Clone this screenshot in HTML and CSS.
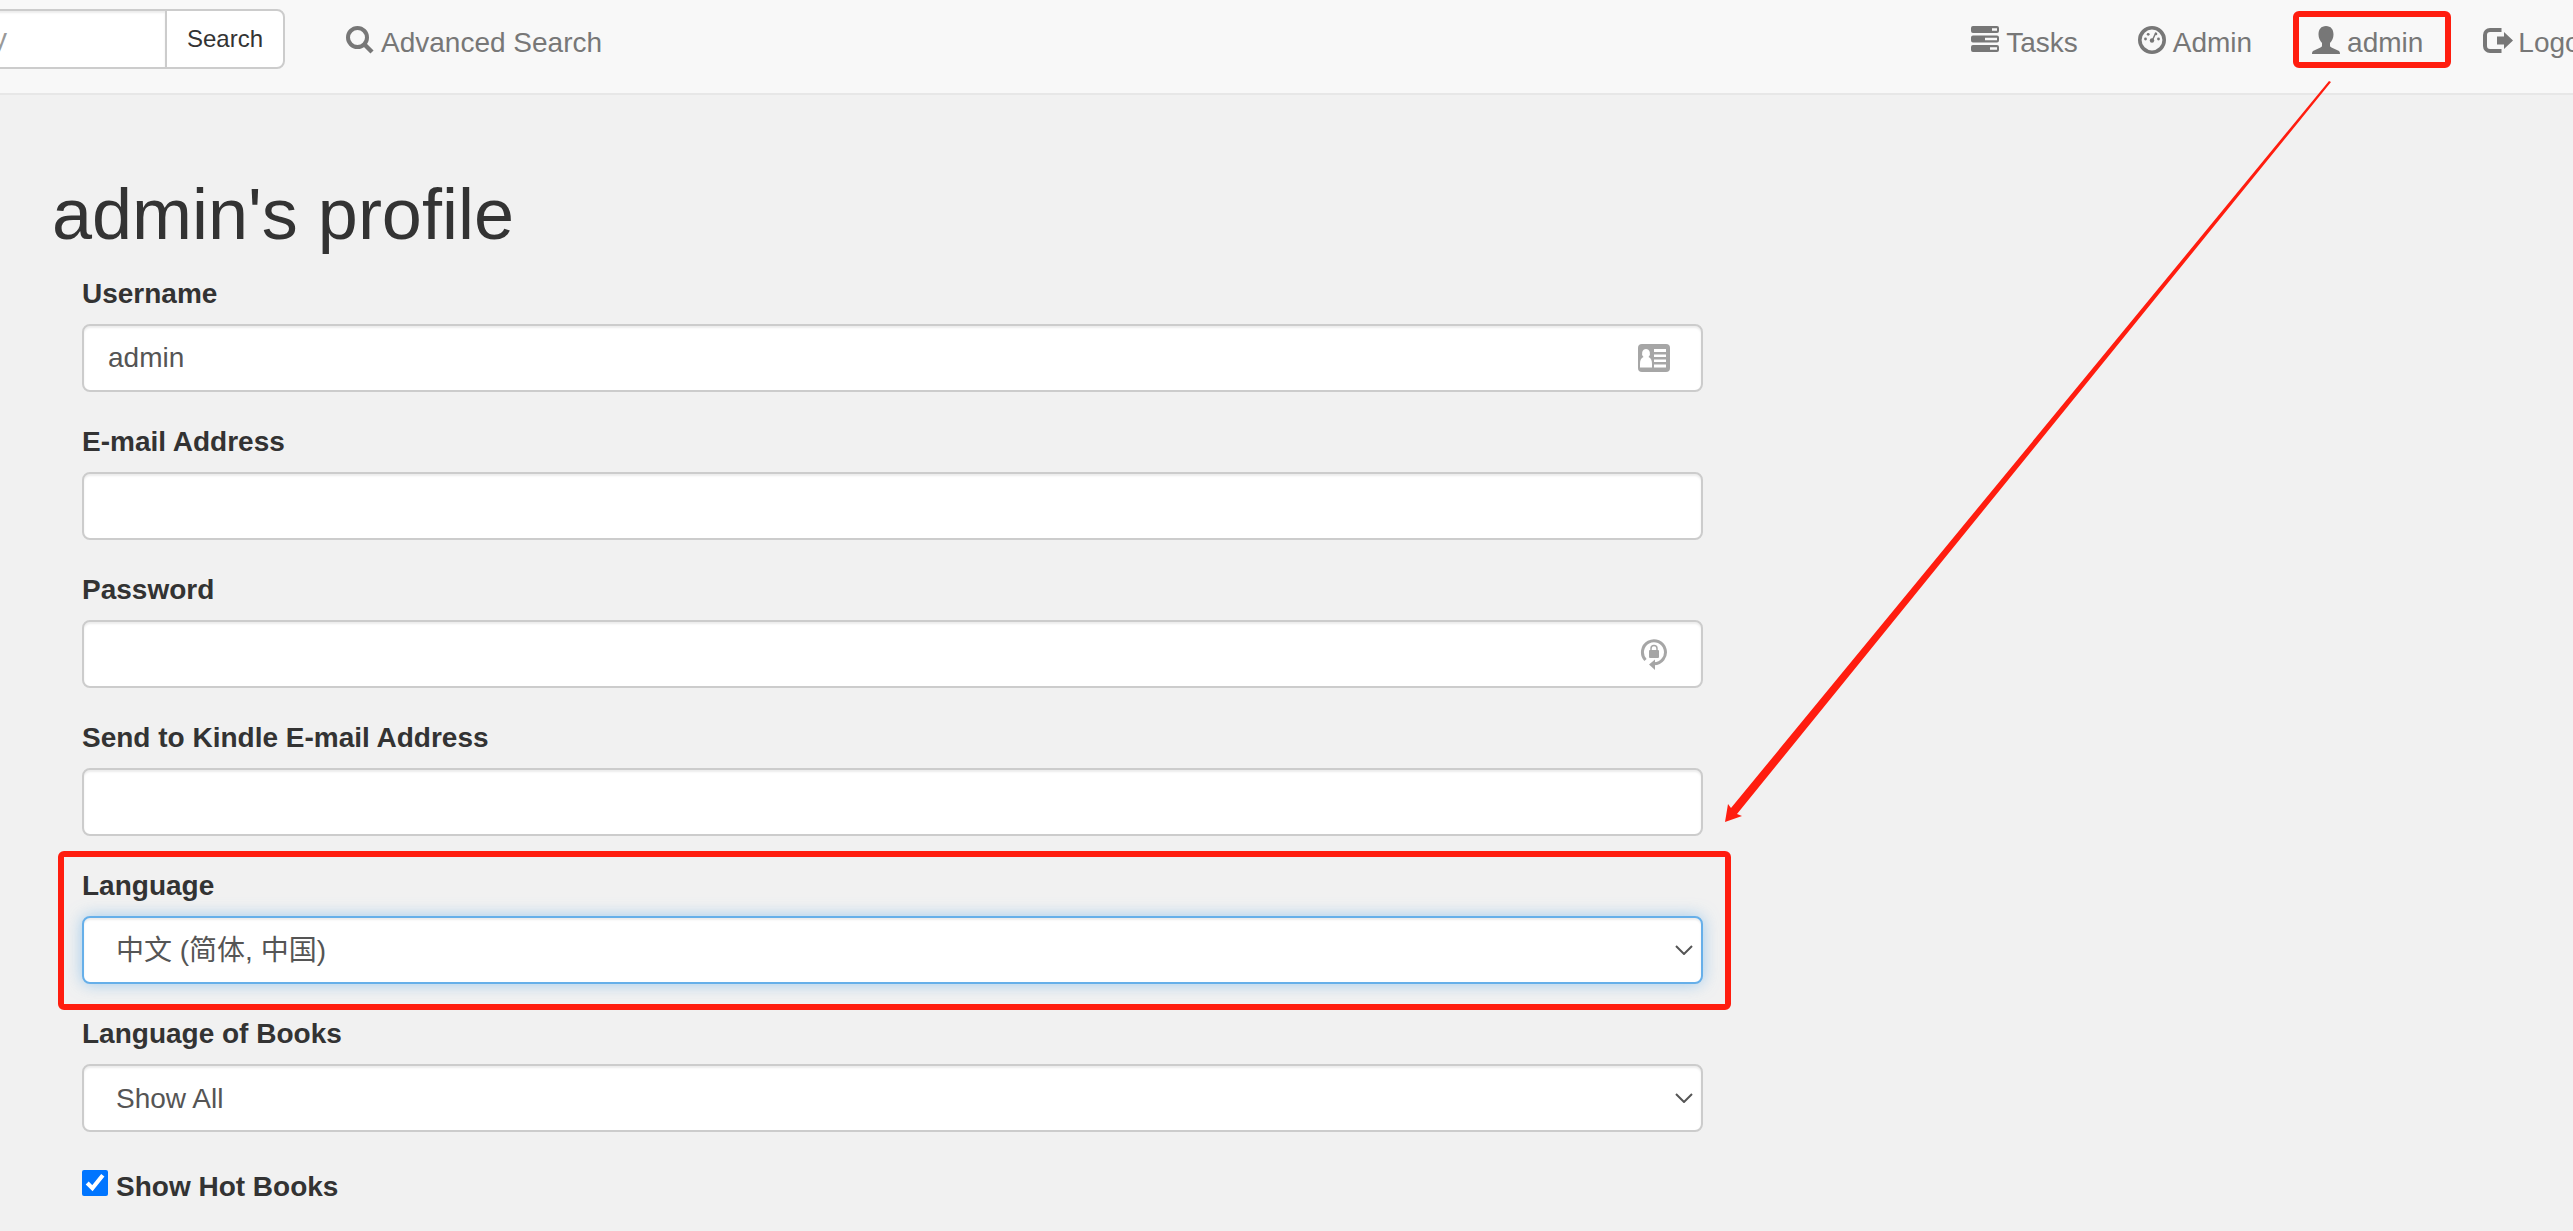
FILE: index.html
```html
<!DOCTYPE html>
<html lang="en">
<head>
<meta charset="utf-8">
<title>admin's profile</title>
<link rel="stylesheet" href="styles.css">
</head>
<body>
<header class="navbar">
  <form class="search" role="search">
    <input class="search-input" type="text" placeholder="Search Library" aria-label="Search Library">
    <button class="search-button" type="button">Search</button>
  </form>
  <nav class="nav nav-left">
    <a class="nav-link" href="#">
      <svg class="icon" viewBox="0 0 28 28" aria-hidden="true"><circle cx="11.500" cy="11.500" r="9.500" fill="none" stroke="currentColor" stroke-width="4"/><path d="M18 18l8 8" stroke="currentColor" stroke-width="4.500"/></svg>
      <span>Advanced Search</span>
    </a>
  </nav>
  <nav class="nav nav-right">
    <a class="nav-link" href="#">
      <svg class="icon" viewBox="0 0 28 28" aria-hidden="true"><path fill="currentColor" fill-rule="evenodd" d="M2 0h24a2 2 0 0 1 2 2v3a2 2 0 0 1-2 2H2a2 2 0 0 1-2-2V2a2 2 0 0 1 2-2zM21 2.200v2.600h5V2.200zM2 9.500h24a2 2 0 0 1 2 2v3a2 2 0 0 1-2 2H2a2 2 0 0 1-2-2v-3a2 2 0 0 1 2-2zM14 11.700v2.600h12v-2.600zM2 19h24a2 2 0 0 1 2 2v3a2 2 0 0 1-2 2H2a2 2 0 0 1-2-2v-3a2 2 0 0 1 2-2zM19 21.200v2.600h7v-2.600z"/></svg>
      <span>Tasks</span>
    </a>
    <a class="nav-link" href="#">
      <svg class="icon" viewBox="0 0 28 28" aria-hidden="true"><circle cx="14" cy="14" r="12.200" fill="none" stroke="currentColor" stroke-width="3.600"/><path d="M14 15l4-8.500" stroke="currentColor" stroke-width="1.500"/><g fill="currentColor"><circle cx="14" cy="14.500" r="2.200"/><circle cx="7.500" cy="13" r="1.400"/><circle cx="10.200" cy="8.300" r="1.400"/><circle cx="18" cy="8" r="1.300"/><circle cx="20.500" cy="13" r="1.400"/></g></svg>
      <span>Admin</span>
    </a>
    <a class="nav-link marked" href="#">
      <svg class="icon" viewBox="0 0 28 28" aria-hidden="true"><path fill="currentColor" d="M14 0c5 0 7.500 3.500 7.500 8.500 0 3.500-1.500 6.500-3.500 8.500v2.500c0 1 .5 1.500 1.500 2l6.500 3c1.500.7 2 1.500 2 3.500H0c0-2 .5-2.800 2-3.500l6.500-3c1-.5 1.500-1 1.500-2V17c-2-2-3.500-5-3.500-8.500C6.500 3.500 9 0 14 0z"/></svg>
      <span>admin</span>
    </a>
    <a class="nav-link" href="#">
      <svg class="icon" viewBox="0 0 28 28" aria-hidden="true"><path fill="none" stroke="currentColor" stroke-width="4" d="M18.500 4H7a5 5 0 0 0-5 5v11a5 5 0 0 0 5 5h11.500"/><path fill="currentColor" d="M14 10.500h7V6l9 8.500-9 8.500v-4.500h-7z"/></svg>
      <span>Logout</span>
    </a>
  </nav>
</header>

<main class="profile">
  <h1 class="title">admin's profile</h1>
  <form class="form">
    <div class="group">
      <label class="label" for="username">Username</label>
      <div class="field">
        <input class="control" id="username" type="text" value="admin">
        <svg class="field-icon" viewBox="0 0 32 32" aria-hidden="true"><rect y="2" width="32" height="28" rx="4" fill="#a6a6a6"/><path fill="#fff" d="M8 7a4 4.500 0 0 1 2.500 8c2.500 1 3.500 3.500 3.500 7v3.500H2V22c0-3.500 1-6 3.500-7A4 4.500 0 0 1 8 7zM16 7h12v3H16zM16 12.500h12v2.500H16zM16 17.500h12v2.500H16zM16 22.500h12v3H16z"/></svg>
      </div>
    </div>
    <div class="group">
      <label class="label" for="email">E-mail Address</label>
      <input class="control" id="email" type="email">
    </div>
    <div class="group">
      <label class="label" for="password">Password</label>
      <div class="field">
        <input class="control" id="password" type="password">
        <svg class="field-icon" viewBox="0 0 32 32" aria-hidden="true"><path fill="none" stroke="#a6a6a6" stroke-width="3" d="M7.500 22A11.500 11.500 0 1 1 16 25.700"/><path fill="#a6a6a6" d="M11 26.500l6-5v10.500z"/><rect x="11" y="12" width="10" height="8" rx="1" fill="#a6a6a6"/><path fill="none" stroke="#a6a6a6" stroke-width="1.500" d="M13 12.500V10.500a3 3 0 0 1 6 0v2"/></svg>
      </div>
    </div>
    <div class="group">
      <label class="label" for="kindle">Send to Kindle E-mail Address</label>
      <input class="control" id="kindle" type="email">
    </div>
    <div class="group highlighted">
      <label class="label" for="locale">Language</label>
      <div class="field">
        <select class="control select active" id="locale"><option lang="zh-CN">中文 (简体, 中国)</option></select>
        <svg class="chevron" viewBox="0 0 18 10" aria-hidden="true"><path fill="none" stroke="#555" stroke-width="2" d="M1 1l8 8 8-8"/></svg>
      </div>
    </div>
    <div class="group">
      <label class="label" for="book-language">Language of Books</label>
      <div class="field">
        <select class="control select" id="book-language"><option>Show All</option></select>
        <svg class="chevron" viewBox="0 0 18 10" aria-hidden="true"><path fill="none" stroke="#555" stroke-width="2" d="M1 1l8 8 8-8"/></svg>
      </div>
    </div>
    <div class="check">
      <input class="checkbox" id="hot" type="checkbox" checked>
      <label class="check-label" for="hot">Show Hot Books</label>
    </div>
  </form>
</main>

<svg class="arrow" viewBox="0 0 608 744" aria-hidden="true"><path fill="#ff1d0f" d="M1 742L4 724l3 4L605 1l2 1L13 734l5 2z"/></svg>
</body>
</html>
```
FILE: styles.css
```css
* {
  box-sizing: border-box;
}

body {
  position: relative;
  margin: 0;
  overflow: hidden;
  background: #f1f1f1;
  color: #333;
  font: 28px/40px "Liberation Sans", "Noto Sans CJK SC", sans-serif;
}

.navbar {
  display: flex;
  align-items: flex-start;
  height: 95px;
  background: #f8f8f8;
  border-bottom: 2px solid #e7e7e7;
}

.search {
  display: flex;
  flex: none;
  margin: 9px 0 0 -201px;
}

.search-input,
.search-button {
  height: 60px;
  border: 2px solid #ccc;
  background: #fff;
  font-family: inherit;
}

.search-input {
  width: 366px;
  padding: 0 24px;
  border-right: 0;
  border-radius: 8px 0 0 8px;
  box-shadow: inset 0 2px 2px rgba(0, 0, 0, 0.075);
  font-size: 28px;
}

.search-input::placeholder {
  color: #999;
}

.search-button {
  padding: 0 20px;
  border-radius: 0 8px 8px 0;
  color: #333;
  font-size: 24px;
}

.nav {
  display: flex;
  gap: 60px;
  margin-top: 23px;
}

.nav-left {
  margin-left: 61px;
}

.nav-right {
  margin-left: auto;
  margin-right: -31px;
}

.nav-link {
  position: relative;
  display: flex;
  gap: 7px;
  color: #777;
  text-decoration: none;
  white-space: nowrap;
}

.icon {
  flex: none;
  width: 28px;
  height: 28px;
  margin-top: 3px;
  overflow: visible;
}

.marked::after,
.highlighted::after {
  content: "";
  position: absolute;
  border: 6px solid #ff1d0f;
  border-radius: 6px;
  pointer-events: none;
}

.marked::after {
  inset: -12px -28px -5px -19px;
}

.profile {
  padding-top: 80px;
}

.title {
  margin: 0 0 20px 52px;
  font-size: 72px;
  line-height: 79px;
  font-weight: 400;
}

.form {
  width: 63%;
  margin-left: 82px;
}

.group {
  position: relative;
  margin-bottom: 30px;
}

.highlighted::after {
  inset: -15px -28px -26px -24px;
}

.label {
  display: block;
  margin-bottom: 10px;
  font-weight: 700;
}

.field {
  position: relative;
}

.control {
  display: block;
  width: 100%;
  height: 68px;
  padding: 0 24px;
  border: 2px solid #ccc;
  border-radius: 8px;
  background: #fff;
  box-shadow: inset 0 2px 2px rgba(0, 0, 0, 0.075);
  color: #555;
  font: inherit;
}

.select {
  appearance: none;
  padding: 2px 32px 0;
}

.active {
  border-color: #66afe9;
  box-shadow: inset 0 2px 2px rgba(0, 0, 0, 0.075), 0 0 16px rgba(102, 175, 233, 0.6);
}

.field-icon {
  position: absolute;
  top: 18px;
  right: 33px;
  width: 32px;
  height: 32px;
}

.chevron {
  position: absolute;
  top: 29px;
  right: 10px;
  width: 18px;
  height: 10px;
  pointer-events: none;
}

.check {
  display: flex;
  gap: 8px;
  padding: 5px 0;
}

.checkbox {
  width: 26px;
  height: 26px;
  margin: 3px 0 0;
  accent-color: #0075ff;
}

.check-label {
  font-weight: 700;
}

.arrow {
  position: absolute;
  top: 80px;
  left: 1724px;
  width: 608px;
  height: 744px;
  pointer-events: none;
}
```
